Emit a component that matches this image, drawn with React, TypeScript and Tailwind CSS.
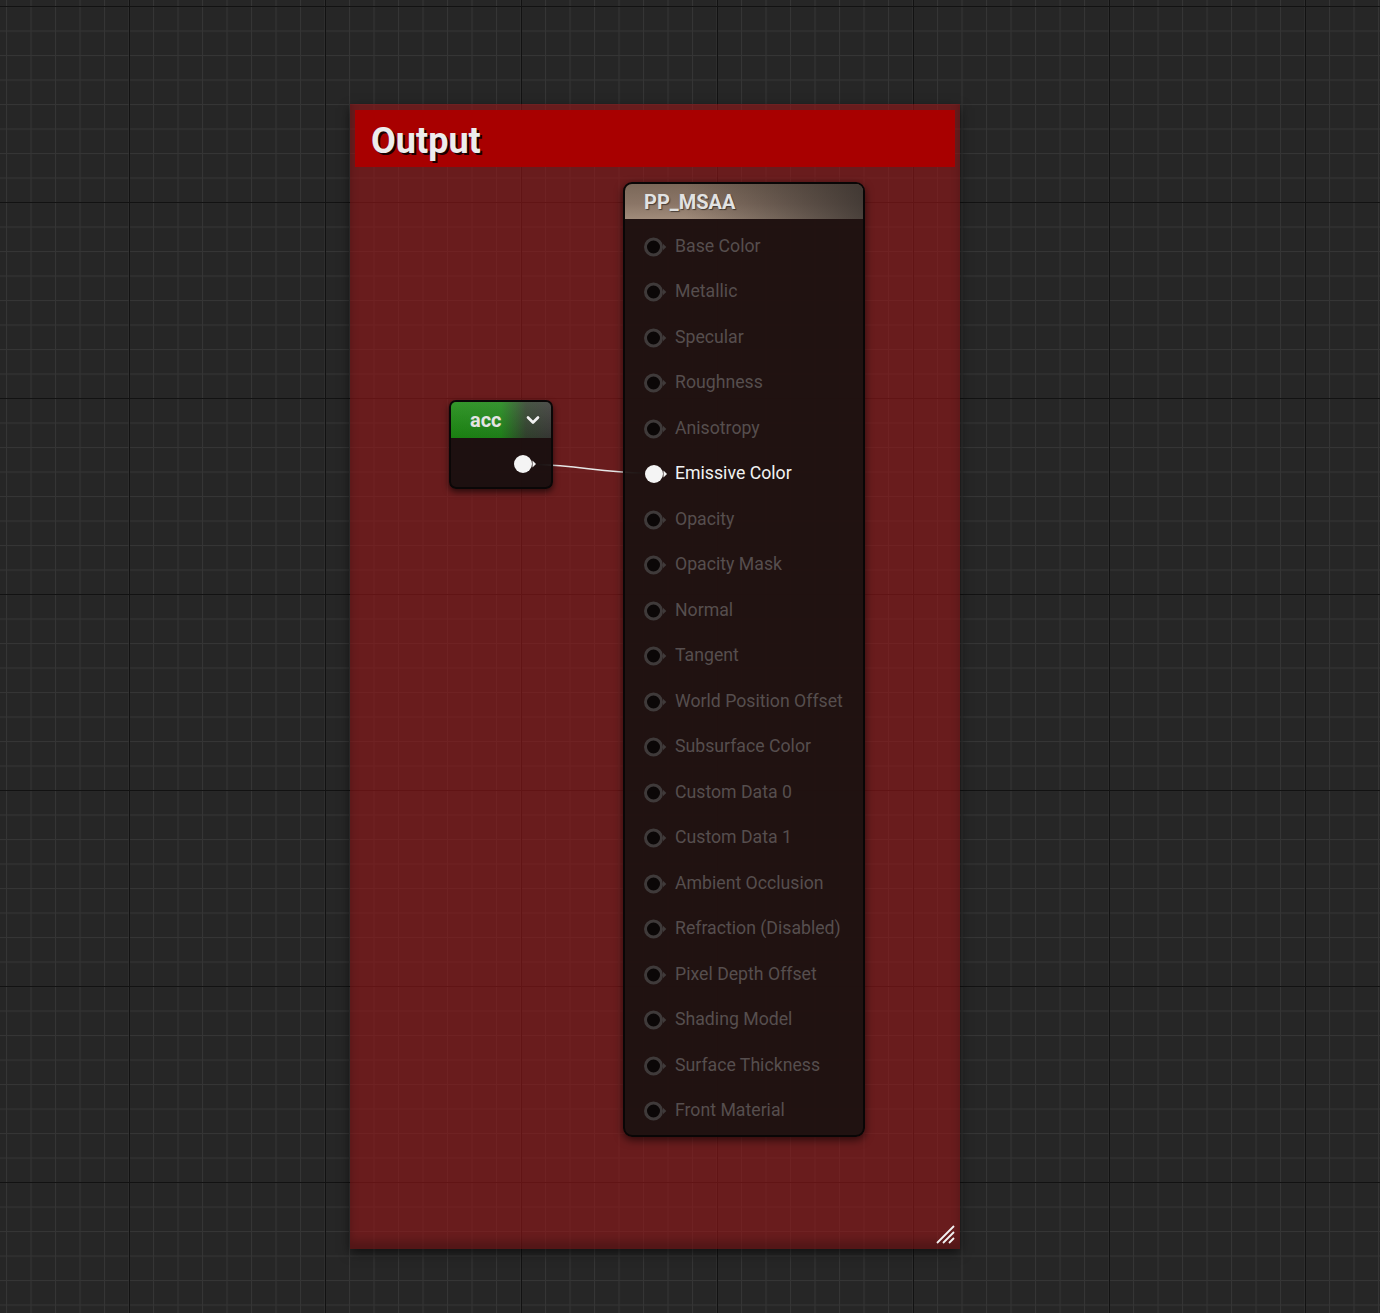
import React from 'react';
import { ChevronDown } from 'lucide-react';

const pins = [
  'Base Color',
  'Metallic',
  'Specular',
  'Roughness',
  'Anisotropy',
  'Emissive Color',
  'Opacity',
  'Opacity Mask',
  'Normal',
  'Tangent',
  'World Position Offset',
  'Subsurface Color',
  'Custom Data 0',
  'Custom Data 1',
  'Ambient Occlusion',
  'Refraction (Disabled)',
  'Pixel Depth Offset',
  'Shading Model',
  'Surface Thickness',
  'Front Material',
];

const PinIcon: React.FC<{ active?: boolean }> = ({ active }) =>
  active ? (
    <svg width="24" height="22" viewBox="0 0 24 22" className="shrink-0">
      <circle cx="10" cy="11" r="9" fill="#f4f4f4" />
      <path d="M19.5 7.5 L23 11 L19.5 14.5 Z" fill="#f4f4f4" />
    </svg>
  ) : (
    <svg width="24" height="22" viewBox="0 0 24 22" className="shrink-0">
      <circle cx="9.5" cy="11" r="8" fill="#0b0707" stroke="#3f3a3a" strokeWidth="3" />
      <path d="M19 7.8 L22.3 11 L19 14.2 Z" fill="#3f3a3a" />
    </svg>
  );

// background grid of the graph canvas
const Grid: React.FC = () => (
  <svg className="absolute inset-0" width="1380" height="1313">
    <defs>
      <pattern id="minor" x="6" y="6" width="24.5" height="24.5" patternUnits="userSpaceOnUse">
        <rect x="0" y="0" width="1" height="24.5" fill="#353535" />
        <rect x="0" y="0" width="24.5" height="1" fill="#353535" />
      </pattern>
      <pattern id="major" x="129" y="6" width="196" height="196" patternUnits="userSpaceOnUse">
        <rect x="0" y="0" width="1" height="196" fill="#121212" />
        <rect x="0" y="0" width="196" height="1" fill="#121212" />
      </pattern>
    </defs>
    <rect width="1380" height="1313" fill="#262626" />
    <rect width="1380" height="1313" fill="url(#minor)" />
    <rect width="1380" height="1313" fill="url(#major)" />
  </svg>
);

export default function App() {
  return (
    <div className="relative w-[1380px] h-[1313px] overflow-hidden bg-[#262626] font-[Roboto,sans-serif]">
      <Grid />

      {/* Comment box */}
      <div className="absolute left-[350px] top-[104px] w-[610px] h-[1145px] bg-[rgba(150,21,23,0.6)] shadow-[inset_0_-8px_8px_rgba(0,0,0,0.22),0_4px_10px_rgba(0,0,0,0.55)] pt-[6px] px-[5px]">
        <div className="h-[57px] bg-[#a80000] flex items-center pl-[16px] pt-[4px]">
          <span className="text-[36px] font-bold text-[#ececec] leading-none [text-shadow:2px_2px_0_#1a0000]">
            Output
          </span>
        </div>
        <svg className="absolute right-[5px] bottom-[5px]" width="20" height="20" viewBox="0 0 20 20">
          <path d="M19 2 L2 19 M19 8 L8 19 M19 14 L14 19" stroke="#f2f2f2" strokeWidth="1.8" />
        </svg>
      </div>

      {/* Wire */}
      <svg className="absolute inset-0 pointer-events-none" width="1380" height="1313">
        <defs>
          <linearGradient id="wire" x1="537" y1="0" x2="644" y2="0" gradientUnits="userSpaceOnUse">
            <stop offset="0" stopColor="#3a3a3a" />
            <stop offset="0.15" stopColor="#e6e6e6" />
            <stop offset="0.8" stopColor="#e6e6e6" />
            <stop offset="1" stopColor="#3a3a3a" />
          </linearGradient>
        </defs>
        <path d="M537 464.5 C 580 465.5, 600 472.5, 645 473" stroke="url(#wire)" strokeWidth="1.6" fill="none" />
      </svg>

      {/* acc node */}
      <div className="absolute left-[449px] top-[400px] w-[104px] h-[89px] rounded-[7px] border-2 border-[#0a0707] bg-[rgba(24,15,15,0.93)] shadow-[0_3px_6px_rgba(0,0,0,0.6)] overflow-hidden flex flex-col">
        <div className="h-[36px] flex items-center justify-between pl-[19px] pr-[8px] bg-[linear-gradient(180deg,rgba(255,255,255,0.1),rgba(0,0,0,0.08)),linear-gradient(90deg,#1c8a12_0%,#20871a_50%,#33442f_75%,#3a3a37_100%)]">
          <span className="text-[20px] font-bold text-[#e4e4e4] leading-none">acc</span>
          <ChevronDown size={20} strokeWidth={3.2} color="#f2f2f2" />
        </div>
        <div className="flex-1 flex items-center justify-end pr-[14px] pt-[2px]">
          <PinIcon active />
        </div>
      </div>

      {/* PP_MSAA node */}
      <div className="absolute left-[623px] top-[182px] w-[242px] h-[955px] rounded-[9px] border-2 border-[#090606] bg-[rgba(27,17,16,0.93)] shadow-[0_3px_8px_rgba(0,0,0,0.6)] overflow-hidden flex flex-col">
        <div className="h-[35px] flex items-center pl-[19px] bg-[linear-gradient(90deg,rgba(0,0,0,0)_25%,rgba(45,40,38,0.75)_100%),linear-gradient(180deg,#7b6859_0%,#8a7566_55%,#a08b7a_100%)]">
          <span className="text-[20px] font-bold text-[#e2e2e2] leading-none [text-shadow:1px_1px_1px_rgba(0,0,0,0.5)]">
            PP_MSAA
          </span>
        </div>
        <div className="flex flex-col pt-[5px]">
          {pins.map((p) => {
            const active = p === 'Emissive Color';
            return (
              <div key={p} className="h-[45.5px] flex items-center pl-[19px] gap-[7px]">
                <PinIcon active={active} />
                <span className={`text-[17.7px] leading-none ${active ? 'text-[#f2f2f2]' : 'text-[#564e4e]'}`}>{p}</span>
              </div>
            );
          })}
        </div>
      </div>
    </div>
  );
}
